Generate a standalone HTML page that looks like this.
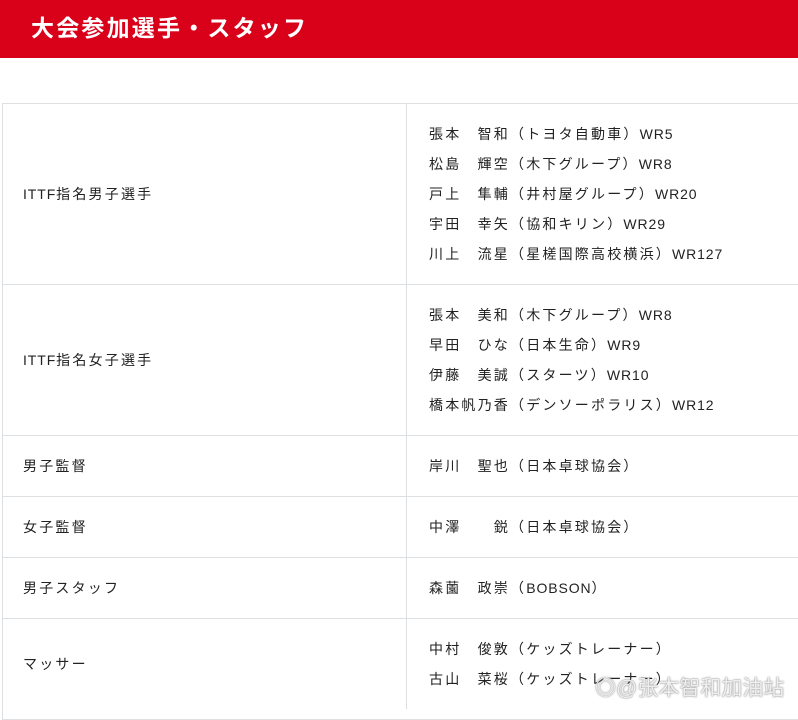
<!DOCTYPE html>
<html><head><meta charset="utf-8"><style>
body{margin:0;width:798px;height:709px;overflow:hidden;background:#fff;font-family:"Liberation Sans","Noto Sans CJK JP",sans-serif;color:#222;}
.hd{position:absolute;left:0;top:0;width:798px;height:58px;background:#d9001a;color:#fff;font-size:23px;font-weight:bold;line-height:58px;}
.hd span{position:absolute;left:31px;top:-1px;letter-spacing:2.2px;}
.tb{position:absolute;left:2px;top:103px;width:800px;border-top:1px solid #dde0e2;}
.r{position:relative;border-bottom:1px solid #dde0e2;border-left:1px solid #dde0e2;}
.r .l{position:absolute;left:0;top:0;bottom:0;width:404px;border-right:1px solid #dde0e2;display:flex;align-items:center;padding-left:20px;box-sizing:border-box;}
.r .v{margin-left:426px;padding:15px 0;}
.t{font-size:14px;letter-spacing:2.2px;line-height:30px;white-space:nowrap;}
.t b{font-weight:normal;letter-spacing:0.9px;}
.wm{position:absolute;left:595px;top:672px;font-size:21px;color:rgba(255,255,255,.85);text-shadow:0 0 2px #999,0 0 1px #777;}
</style></head><body>
<div class="hd"><span>大会参加選手・スタッフ</span></div>
<div class="tb">
<div class="r" style="height:180px"><div class="l t"><b>ITTF</b>指名男子選手</div><div class="v t">張本　智和（トヨタ自動車）<b>WR5</b><br>松島　輝空（木下グループ）<b>WR8</b><br>戸上　隼輔（井村屋グループ）<b>WR20</b><br>宇田　幸矢（協和キリン）<b>WR29</b><br>川上　流星（星槎国際高校横浜）<b>WR127</b></div></div>
<div class="r" style="height:150px"><div class="l t"><b>ITTF</b>指名女子選手</div><div class="v t">張本　美和（木下グループ）<b>WR8</b><br>早田　ひな（日本生命）<b>WR9</b><br>伊藤　美誠（スターツ）<b>WR10</b><br>橋本帆乃香（デンソーポラリス）<b>WR12</b></div></div>
<div class="r" style="height:60px"><div class="l t">男子監督</div><div class="v t">岸川　聖也（日本卓球協会）</div></div>
<div class="r" style="height:60px"><div class="l t">女子監督</div><div class="v t">中澤　　鋭（日本卓球協会）</div></div>
<div class="r" style="height:60px"><div class="l t">男子スタッフ</div><div class="v t">森薗　政崇（<b>BOBSON</b>）</div></div>
<div class="r" style="height:100px"><div class="l t" style="height:90px">マッサー</div><div class="v t">中村　俊敦（ケッズトレーナー）<br>古山　菜桜（ケッズトレーナー）</div></div>
</div>
<div class="wm">◎@张本智和加油站</div>
</body></html>
